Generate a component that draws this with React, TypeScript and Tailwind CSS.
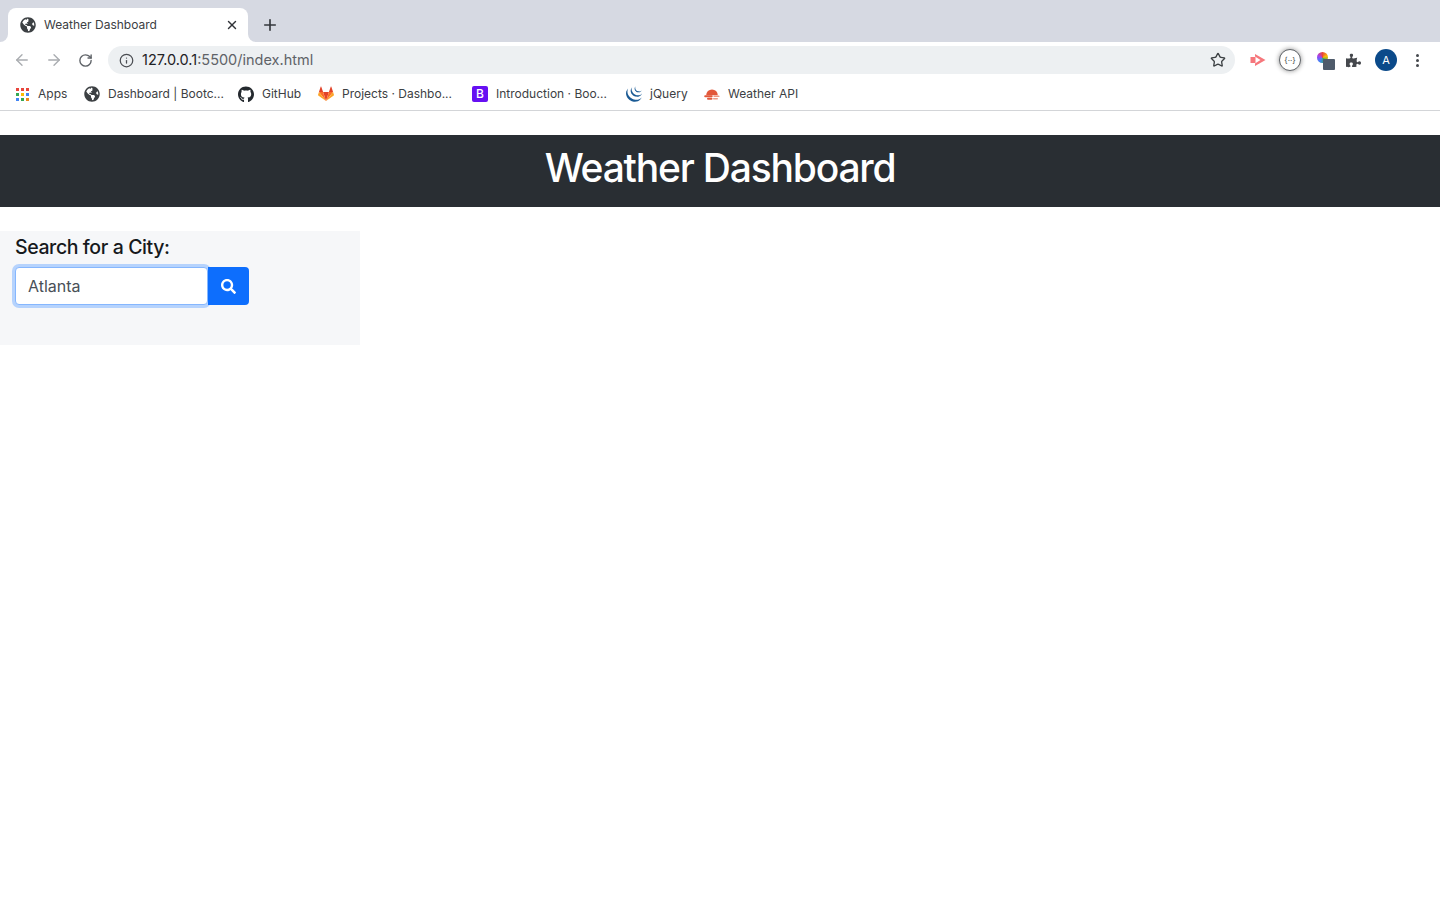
import React from "react";
import { ArrowLeft, ArrowRight, Info, Plus, RotateCw, Star, X } from "lucide-react";
import { FaGithub, FaGlobeAmericas, FaPuzzlePiece, FaSearch } from "react-icons/fa";
import { SiJquery } from "react-icons/si";

const appColors = [
  "bg-[#e8453c]", "bg-[#e8453c]", "bg-[#e8453c]",
  "bg-[#34a853]", "bg-[#fbbc05]", "bg-[#4285f4]",
  "bg-[#4285f4]", "bg-[#34a853]", "bg-[#ea8a1e]",
];

function GitlabLogo() {
  return (
    <svg width="16" height="16" viewBox="0 0 24 24">
      <path d="M12 22.5 16.4 9H7.6z" fill="#e24329" />
      <path d="M12 22.5 7.6 9H1.4z" fill="#fc6d26" />
      <path d="M1.4 9 .1 13.1c-.1.4 0 .8.3 1L12 22.5z" fill="#fca326" />
      <path d="M1.4 9h6.2L4.9 1c-.1-.4-.7-.4-.9 0z" fill="#e24329" />
      <path d="M12 22.5 16.4 9h6.2z" fill="#fc6d26" />
      <path d="m22.6 9 1.3 4.1c.1.4 0 .8-.3 1L12 22.5z" fill="#fca326" />
      <path d="M22.6 9h-6.2l2.7-8c.1-.4.7-.4.9 0z" fill="#e24329" />
    </svg>
  );
}

function WeatherLogo() {
  return (
    <svg width="16" height="16" viewBox="0 0 16 16">
      <path d="M2.2 9.2a5.8 5.8 0 0 1 11.6 0z" fill="#e2583a" />
      <rect x="0.2" y="9.2" width="8.5" height="2" rx="1" fill="#e2583a" />
      <rect x="3" y="11.8" width="5.5" height="2" rx="1" fill="#e2583a" />
      <rect x="9.5" y="9.6" width="6" height="1.5" rx="0.7" fill="#ee9a85" />
      <rect x="9" y="12" width="5" height="1.5" rx="0.7" fill="#ee9a85" />
    </svg>
  );
}

function VideoExtension() {
  return (
    <svg width="16" height="14" viewBox="0 0 16 14">
      <rect x="0.5" y="4" width="5" height="6" fill="#f6777c" />
      <path d="M5 1 15.5 7 5 13V10.5L10.5 7 5 3.5z" fill="#f6777c" />
    </svg>
  );
}

function Bookmark({ icon, label, className }: { icon: React.ReactNode; label: string; className: string }) {
  return (
    <div className={`flex items-center gap-2 ${className}`}>
      <span className="flex h-4 w-4 items-center justify-center">{icon}</span>
      <span className="text-[12px] leading-4 whitespace-nowrap text-[#3c4043]">{label}</span>
    </div>
  );
}

function BrowserChrome() {
  return (
    <div className="font-['Inter',sans-serif]">
      <div className="flex h-[42px] items-end bg-[#d6d9e2] pl-2">
        <div className="relative flex h-[34px] w-[240px] items-center rounded-t-[8px] bg-white pl-3 pr-[9px]">
          <span className="absolute -left-2 bottom-0 h-2 w-2 bg-white">
            <span className="block h-2 w-2 rounded-br-[8px] bg-[#d6d9e2]" />
          </span>
          <span className="absolute -right-2 bottom-0 h-2 w-2 bg-white">
            <span className="block h-2 w-2 rounded-bl-[8px] bg-[#d6d9e2]" />
          </span>
          <FaGlobeAmericas className="h-4 w-4 text-[#3c4043]" />
          <span className="ml-2 flex-1 text-[12px] text-[#3c4043]">Weather Dashboard</span>
          <X className="h-[14px] w-[14px] text-[#303338]" strokeWidth={2.4} />
        </div>
        <Plus className="mb-[8px] ml-[13px] h-[18px] w-[18px] text-[#34373c]" strokeWidth={2.2} />
      </div>

      <div className="flex h-9 items-center bg-white pl-[13px]">
        <ArrowLeft className="h-[18px] w-[18px] text-[#a9acb0]" strokeWidth={1.8} />
        <ArrowRight className="ml-[14px] h-[18px] w-[18px] text-[#a9acb0]" strokeWidth={1.8} />
        <RotateCw className="ml-[15px] h-[15px] w-[15px] text-[#5f6368]" strokeWidth={2.2} />
        <div className="ml-[15px] flex h-7 w-[1127px] items-center rounded-full bg-[#edf0f2] pl-[11px] pr-[9px]">
          <Info className="h-[15px] w-[15px] text-[#4a4d52]" strokeWidth={2} />
          <span className="ml-2 flex-1 text-[14.5px] text-[#5f6368]">
            <span className="text-[#1f2124]">127.0.0.1</span>:5500/index.html
          </span>
          <Star className="h-4 w-4 text-[#3c4043]" strokeWidth={2} />
        </div>
        <div className="ml-[15px]">
          <VideoExtension />
        </div>
        <div className="ml-[13px] flex h-[22px] w-[22px] items-center justify-center rounded-full border border-[#5f6368] bg-white shadow-[0_0_5px_rgba(0,0,0,0.45)]">
          <span className="text-[8px] leading-none text-[#3c4043]">{"{··}"}</span>
        </div>
        <div className="relative ml-[15px] h-5 w-5">
          <span className="absolute left-[1px] top-[2px] h-[11px] w-[11px] rounded-full bg-[conic-gradient(#e8453c,#fbbc05,#34a853,#4285f4,#a142f4,#e8453c)]" />
          <span className="absolute left-[7px] top-[9px] h-[11px] w-[12px] rounded-[1px] bg-[#4f5b6b]" />
        </div>
        <FaPuzzlePiece className="ml-[10px] h-[15px] w-[15px] text-[#45484d]" />
        <div className="ml-[14px] flex h-[22px] w-[22px] items-center justify-center rounded-full bg-[#0b4a8a] text-[11px] text-white">A</div>
        <div className="ml-[19px] flex flex-col gap-[2px]">
          <span className="h-[3px] w-[3px] rounded-full bg-[#45484d]" />
          <span className="h-[3px] w-[3px] rounded-full bg-[#45484d]" />
          <span className="h-[3px] w-[3px] rounded-full bg-[#45484d]" />
        </div>
      </div>

      <div className="flex h-[33px] items-center border-b border-[#d3d5d8] bg-white pl-[14px]">
        <Bookmark
          className="w-[70px]"
          label="Apps"
          icon={
            <span className="grid grid-cols-3 gap-[2px]">
              {appColors.map((c, i) => (
                <span key={i} className={`h-[3px] w-[3px] ${c}`} />
              ))}
            </span>
          }
        />
        <Bookmark className="w-[154px]" label="Dashboard | Bootc..." icon={<FaGlobeAmericas className="h-4 w-4 text-[#3c4043]" />} />
        <Bookmark className="w-[80px]" label="GitHub" icon={<FaGithub className="h-[17px] w-[17px] text-[#24292e]" />} />
        <Bookmark className="w-[154px]" label="Projects · Dashbo..." icon={<GitlabLogo />} />
        <Bookmark
          className="w-[154px]"
          label="Introduction · Boo..."
          icon={
            <span className="flex h-4 w-4 items-center justify-center rounded-[2px] bg-[#6610f2] text-[12px] font-medium leading-none text-white">B</span>
          }
        />
        <Bookmark className="w-[78px]" label="jQuery" icon={<SiJquery className="h-4 w-4 text-[#1a5a94]" />} />
        <Bookmark label="Weather API" className="" icon={<WeatherLogo />} />
      </div>
    </div>
  );
}

export default function App() {
  return (
    <div className="min-h-[900px] bg-white font-['Inter',sans-serif] text-[#212529]">
      <BrowserChrome />
      <header className="mt-6 h-[72px] bg-[#292e33] pt-[9px] text-center">
        <h1 className="text-[39px] font-medium leading-[48px] tracking-[-1.2px] text-white">Weather Dashboard</h1>
      </header>
      <section className="mt-6 h-[114px] w-[360px] bg-[#f6f7f9] px-[15px] pt-1">
        <h5 className="text-[19.5px] font-medium leading-6 tracking-[-0.4px] text-[#16191c]">Search for a City:</h5>
        <div className="mt-2 flex">
          <input
            defaultValue="Atlanta"
            className="h-[38px] w-[193px] rounded-[4px] border border-[#86b7fe] bg-white px-3 text-[16px] text-[#495057] shadow-[0_0_0_3px_#b6d3fd] outline-none"
          />
          <button className="relative flex h-[38px] w-[41px] items-center justify-center rounded-r-[4px] bg-[#0d6efd] text-white">
            <FaSearch className="h-[15px] w-[15px]" />
          </button>
        </div>
      </section>
    </div>
  );
}
